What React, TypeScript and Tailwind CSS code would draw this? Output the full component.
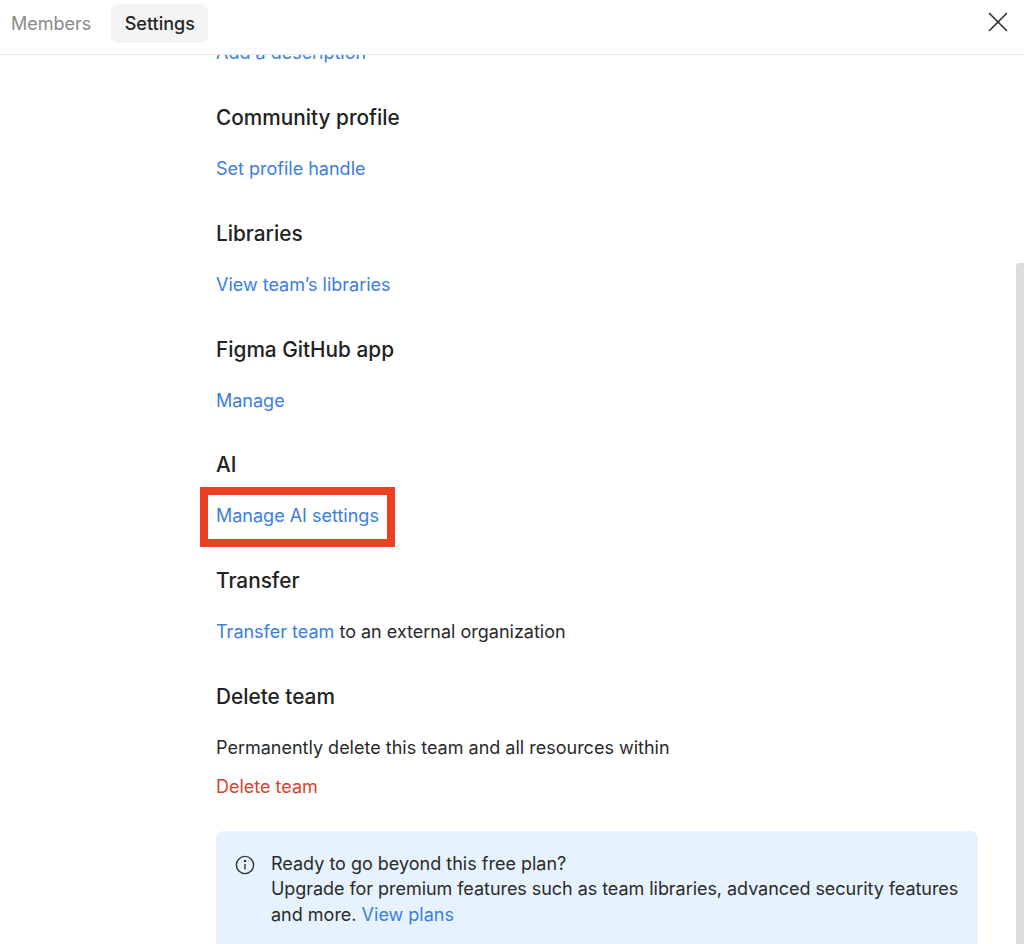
import { X } from "lucide-react";

const linkClass = "text-[#3b7ee0]";

function Section({ title, children }: { title: string; children: React.ReactNode }) {
  return (
    <section className="h-[115.8px]">
      <h2 className="h-[51px] text-[20.8px] leading-[26px] font-medium text-[#222]">{title}</h2>
      {children}
    </section>
  );
}

export default function App() {
  return (
    <div className="relative h-[944px] w-[1024px] overflow-hidden bg-white font-['Inter',sans-serif] text-[18px] leading-[26px] text-[#2a2a2a]">
      {/* Tabs */}
      <header className="flex h-[55px] items-start justify-between border-b border-[#e5e5e5] pt-[4px] pr-[9px] pl-[11px]">
        <nav className="flex items-center gap-[20px]">
          <span className="text-[#8a8a8a]">Members</span>
          <span className="flex h-[39px] w-[97px] items-center justify-center rounded-[7px] bg-[#f4f4f4] font-medium text-[#262626]">
            Settings
          </span>
        </nav>
        <X className="mt-[1px] size-[34px] text-[#333]" strokeWidth={1.2} />
      </header>

      {/* Scrolled content */}
      <main className="h-[889px] overflow-hidden pr-[46px] pl-[216px]">
        <a className={`-mt-[15px] mb-[36px] block h-[26px] ${linkClass}`}>Add a description</a>
        <div className="pt-[3px]">
          <Section title="Community profile">
            <a className={linkClass}>Set profile handle</a>
          </Section>
          <Section title="Libraries">
            <a className={linkClass}>View team’s libraries</a>
          </Section>
          <Section title="Figma GitHub app">
            <a className={linkClass}>Manage</a>
          </Section>
          <Section title="AI">
            <a className={`relative inline-block ${linkClass}`}>
              Manage AI settings
              <span className="absolute -top-[16px] -right-[16px] -bottom-[18px] -left-[16px] border-[8px] border-[#ec3f23]" />
            </a>
          </Section>
          <Section title="Transfer">
            <a className={linkClass}>Transfer team</a> to an external organization
          </Section>
          <section>
            <h2 className="h-[51px] text-[20.8px] leading-[26px] font-medium text-[#222]">Delete team</h2>
            <p className="mb-[13px]">Permanently delete this team and all resources within</p>
            <a className="block text-[#d9432c]">Delete team</a>
          </section>
          <aside className="mt-[31px] flex h-[130px] gap-[16px] rounded-[8px] bg-[#e6f3fe] pt-[20px] pl-[19px]">
            <svg viewBox="0 0 20 20" className="mt-[4px] size-[20px] shrink-0 text-[#333]" fill="none" stroke="currentColor" strokeWidth="1.4">
              <circle cx="10" cy="10" r="8.6" />
              <path d="M10 9v5.5" />
              <circle cx="10" cy="6" r="0.6" fill="currentColor" />
            </svg>
            <p className="leading-[25.5px]">
              Ready to go beyond this free plan?
              <br />
              <span className="tracking-[-0.05px]">
                Upgrade for premium features such as team libraries, advanced security features
              </span>
              <br />
              and more. <a className={linkClass}>View plans</a>
            </p>
          </aside>
        </div>
      </main>

      {/* Scrollbar */}
      <div className="absolute top-[263px] right-0 bottom-0 w-[8px] rounded-tl-[4px] bg-[#dcdcdc]" />
    </div>
  );
}
